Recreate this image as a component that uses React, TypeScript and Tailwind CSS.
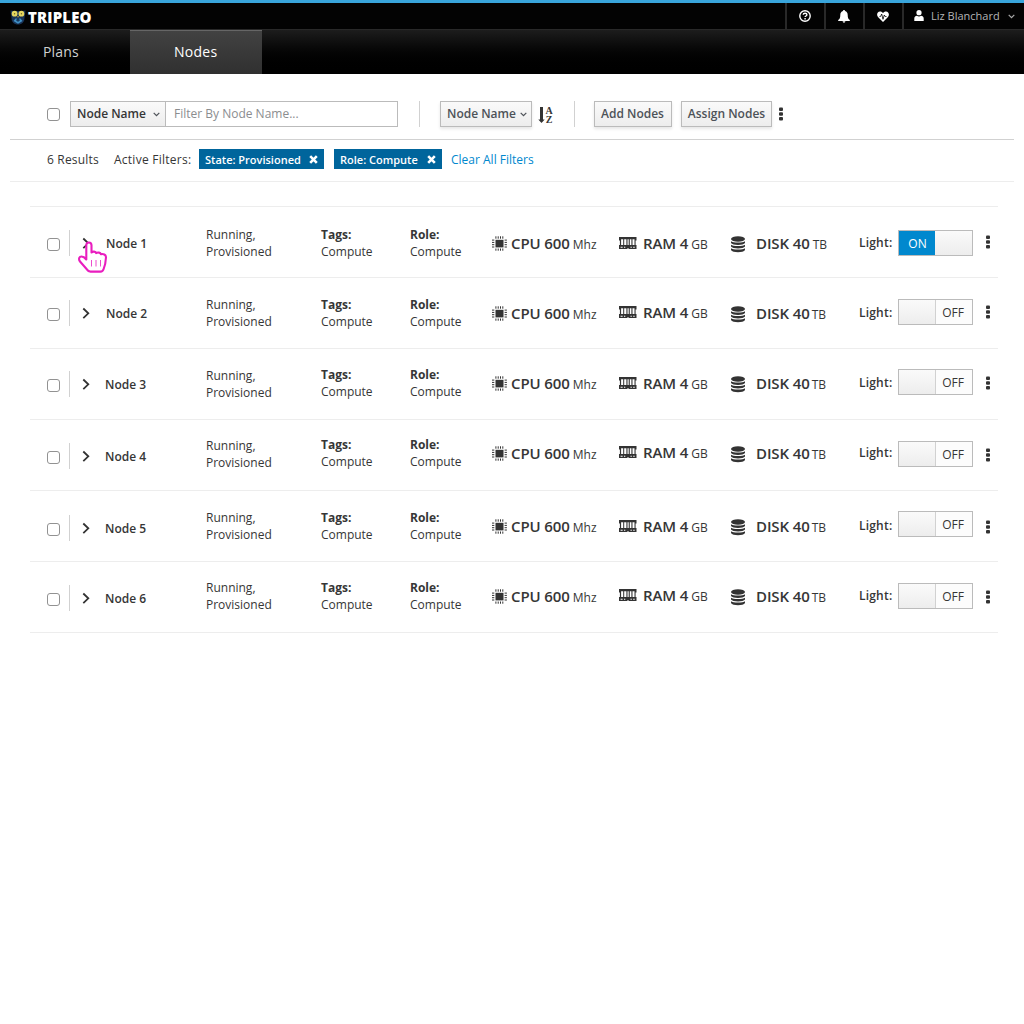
import React from "react";

type Offsets = {
  check: number;
  name: number;
  status: number;
  tags: number;
  stats: number;
  ram: number;
  light: number;
  toggle: number;
  kebab: number;
};

type NodeRow = { id: number; on: boolean; nudge: number; gap: number; top: Offsets };

const nodes: NodeRow[] = [
  { id: 1, on: true, nudge: 0, gap: 3, top: { check: 31, name: 28, status: 19, tags: 19, stats: 26, ram: 26, light: 27, toggle: 23, kebab: 28 } },
  { id: 2, on: false, nudge: 0, gap: 2, top: { check: 30, name: 27, status: 18, tags: 18, stats: 25, ram: 24, light: 26, toggle: 21, kebab: 27 } },
  { id: 3, on: false, nudge: -1, gap: 2, top: { check: 30, name: 27, status: 18, tags: 17, stats: 24, ram: 24, light: 25, toggle: 20, kebab: 27 } },
  { id: 4, on: false, nudge: -1, gap: 2, top: { check: 31, name: 28, status: 17, tags: 16, stats: 23, ram: 22, light: 24, toggle: 21, kebab: 28 } },
  { id: 5, on: false, nudge: -1, gap: 2, top: { check: 32, name: 29, status: 18, tags: 18, stats: 25, ram: 25, light: 26, toggle: 20, kebab: 29 } },
  { id: 6, on: false, nudge: -1, gap: 2, top: { check: 31, name: 28, status: 17, tags: 17, stats: 24, ram: 23, light: 25, toggle: 21, kebab: 28 } },
];

function Check() {
  return <span className="block h-[13px] w-[13px] shrink-0 rounded-[3px] border border-[#929292] bg-white" />;
}

function Kebab() {
  return (
    <svg width="4" height="14" viewBox="0 0 4 14" fill="#333" className="block shrink-0">
      <rect x="0" y="0.5" width="4" height="3.5" rx="1" />
      <rect x="0" y="5.2" width="4" height="3.5" rx="1" />
      <rect x="0" y="10" width="4" height="3.5" rx="1" />
    </svg>
  );
}

function Caret({ color = "#4d5258" }: { color?: string }) {
  return (
    <svg width="7" height="5" viewBox="0 0 7 5" fill="none" stroke={color} strokeWidth="1.2" className="block shrink-0">
      <path d="M0.7 0.8 3.5 3.7 6.3 0.8" />
    </svg>
  );
}

function Owl() {
  return (
    <svg width="16" height="16" viewBox="0 0 16 16" className="block shrink-0">
      <path d="M.5 1.500 4 2h8l3.500-.5L14.500 9c0 4-2.500 6.500-6.500 6.500S1.500 13 1.500 9z" fill="#1a3357" />
      <path d="M5.500 9.500h5l2 2.500L8 14.800 3.500 12z" fill="#3f8fc4" />
      <path d="M7 9h2l.8 2.800L8 12.800l-1.800-1z" fill="#17385e" />
      <circle cx="4.600" cy="4.700" r="2.900" fill="#e6d65f" />
      <circle cx="11.400" cy="4.700" r="2.900" fill="#e6d65f" />
      <circle cx="4.600" cy="4.700" r="0.700" fill="#6b642c" />
      <circle cx="11.400" cy="4.700" r="0.700" fill="#6b642c" />
      <path d="M7.200 7h1.600L8 9z" fill="#c9a83a" />
    </svg>
  );
}

function CpuIcon() {
  const pins = [4, 6.3, 8.6, 10.9];
  return (
    <svg width="15" height="15" viewBox="0 0 15 15" fill="#333" className="block shrink-0">
      <rect x="3.500" y="3.800" width="8" height="7.600" />
      {pins.map((p) => (
        <g key={p}>
          <rect x={p - 0.6} y="0.300" width="1" height="2.400" />
          <rect x={p - 0.6} y="12.500" width="1" height="2.200" />
          <rect x="0" y={p - 0.4} width="2.300" height="1" />
          <rect x="12.600" y={p - 0.4} width="2.300" height="1" />
        </g>
      ))}
    </svg>
  );
}

function RamIcon() {
  return (
    <svg width="18" height="12" viewBox="0 0 18 12" className="block shrink-0">
      <path
        fill="#333"
        fillRule="evenodd"
        d="M0 0h17.500v3.500h-.9v4.500h.9V12H9.500v-1H8.500V12H0V8h.9V3.500H0zM2.100 2.200V8h2.100V2.200zM5.200 2.200V8h2.200V2.200zM8.500 2.200V8h1.200V2.200zM10.800 2.200V8h1.600V2.200zM13.500 2.200V8h2V2.200zM1.600 9.800v1h2v-1zM5 9.800v1h1.300v-1zM11.500 9.800v1h1.300v-1zM14.200 9.800v1h1.500v-1z"
      />
    </svg>
  );
}

function DiskIcon() {
  return (
    <svg width="15" height="17" viewBox="0 0 15 17" fill="#333" className="block shrink-0">
      <ellipse cx="7" cy="3" rx="7" ry="2.800" />
      <path d="M0 5.200C1.500 6.900 12.500 6.900 14 5.200v1.800c-1.500 2.500-12.500 2.500-14 0z" />
      <path d="M0 8.700c1.500 1.700 12.500 1.700 14 0v1.800c-1.500 2.500-12.500 2.500-14 0z" />
      <path d="M0 12.200c1.500 1.700 12.500 1.700 14 0V14c-1.500 3-12.500 3-14 0z" />
    </svg>
  );
}

function Stat({ label, unit, gap }: { label: string; unit: string; gap: number }) {
  return (
    <span className="flex items-baseline whitespace-nowrap">
      <span className="text-[15px] leading-5 font-semibold tracking-[-0.100px]">{label}</span>
      <span className="text-xs leading-5" style={{ marginLeft: gap }}>{unit}</span>
    </span>
  );
}

function Toggle({ on }: { on: boolean }) {
  return (
    <div className="flex h-[26px] w-[75px] border border-[#bbb] bg-[#fcfcfc] text-xs leading-6">
      {on ? (
        <>
          <span className="w-9 bg-[#0088ce] pt-px pl-px text-center text-white">ON</span>
          <span className="flex-1 bg-linear-to-b from-[#fafafa] to-[#ededed]" />
        </>
      ) : (
        <>
          <span className="w-[37px] border-r border-[#d1d1d1] bg-linear-to-b from-[#fafafa] to-[#ededed]" />
          <span className="flex-1 pt-px pr-[2px] text-center font-medium">OFF</span>
        </>
      )}
    </div>
  );
}

function Pair({ label }: { label: string }) {
  return (
    <div className="text-xs leading-[17px]">
      <div className="font-bold">{label}</div>
      <div>Compute</div>
    </div>
  );
}

function Row({ node }: { node: NodeRow }) {
  const t = node.top;
  return (
    <div className="relative flex h-[71px] items-start border-b border-[#ededed] pl-[17px]">
      <div className="w-[22px]" style={{ paddingTop: t.check }}><Check /></div>
      <div className="w-px" style={{ paddingTop: t.check - 8 }}><div className="h-[26px] bg-[#d1d1d1]" /></div>
      <div className="w-9 pl-3" style={{ paddingTop: t.name + 2 }}>
        <svg width="9" height="13" viewBox="0 0 9 13" fill="none" stroke="#333" strokeWidth="1.800" className="block">
          <path d="M1.300 1.500 6.300 6.300 1.300 11.100" />
        </svg>
      </div>
      <div className="w-[100px] text-xs leading-[18px] font-semibold" style={{ paddingTop: t.name }}>
        <span className="block" style={{ marginLeft: node.nudge }}>Node {node.id}</span>
      </div>
      <div className="w-[115px] text-xs leading-[17px]" style={{ paddingTop: t.status }}>
        Running,<br />Provisioned
      </div>
      <div className="w-[89px]" style={{ paddingTop: t.tags }}><Pair label="Tags:" /></div>
      <div className="w-[82px]" style={{ paddingTop: t.tags }}><Pair label="Role:" /></div>
      <div className="flex w-[127px] gap-1" style={{ paddingTop: t.stats }}>
        <div className="pt-[3px]"><CpuIcon /></div>
        <Stat label="CPU 600" unit="Mhz" gap={3} />
      </div>
      <div className="flex w-[112px] gap-[6px]" style={{ paddingTop: t.ram }}>
        <div className="pt-1"><RamIcon /></div>
        <Stat label="RAM 4" unit="GB" gap={3} />
      </div>
      <div className="flex w-[128px] gap-[10px]" style={{ paddingTop: t.stats }}>
        <div className="pt-[3px]"><DiskIcon /></div>
        <Stat label="DISK 40" unit="TB" gap={node.gap} />
      </div>
      <div className="w-[39px] text-xs leading-[17px] font-semibold tracking-[0.200px]" style={{ paddingTop: t.light }}>Light:</div>
      <div className="w-[88px]" style={{ paddingTop: t.toggle }}><Toggle on={node.on} /></div>
      <div style={{ paddingTop: t.kebab }}><Kebab /></div>
      {node.id === 1 && (
        <svg width="30" height="32" viewBox="0 0 30 32" fill="#fff" stroke="#e91ebf" strokeWidth="2.100" strokeLinejoin="round" className="absolute left-12 top-[34px]">
          <path d="M8.300 18.500V4.200c0-3.700 5.200-3.700 5.200 0v7.300c1.200-1.300 4.200-1.200 4.700.6 1.500-1 4.200-.6 4.700 1.200 2.300-.8 5.100.3 5.100 3-.2 4.500-1 8.500-2.500 12-.5 1.800-1.300 2.300-3 2.300h-10c-1.800 0-2.700-.8-3.700-2.300L1.800 20.300c-1.500-2.600-.5-4.800 1.700-4.800 2 0 3.500 1.300 4.800 3z" />
          <path strokeWidth="0.800" d="M13.500 19v6.500M18 19v6.500M22.500 19v6.500" />
        </svg>
      )}
    </div>
  );
}

function FilterTag({ label, className }: { label: string; className: string }) {
  return (
    <div className={`flex h-5 items-center justify-between bg-[#00659c] px-[6px] text-[11px] font-semibold text-white ${className}`}>
      <span>{label}</span>
      <svg width="9" height="9" viewBox="0 0 9 9" stroke="#fff" strokeWidth="2.600" className="block">
        <path d="M1.200 1.200 7.800 7.800M7.800 1.200 1.200 7.800" />
      </svg>
    </div>
  );
}

const button =
  "flex h-[26px] items-center border border-[#bbb] bg-linear-to-b from-[#fafafa] to-[#ededed] text-xs font-semibold whitespace-nowrap";

export default function App() {
  return (
    <div className="h-[1024px] w-[1024px] overflow-hidden bg-white font-['Open_Sans',sans-serif] text-[#363636]">
      <header className="flex h-[29px] justify-between border-t-[3px] border-[#39a5dc] bg-[#030303]">
        <div className="flex items-start pl-[10px]">
          <div className="pt-[6px]"><Owl /></div>
          <span className="pt-[4px] pl-[2px] text-[15px] leading-5 font-extrabold tracking-[0.150px] text-white">TRIPLEO</span>
        </div>
        <div className="flex text-white">
          <div className="flex w-[39px] items-center justify-center border-l-2 border-[#292929] pr-[2px]">
            <svg width="12" height="12" viewBox="0 0 12 12" fill="none" stroke="#fff" strokeWidth="1.400" className="block">
              <circle cx="6" cy="6" r="5.200" />
              <path d="M4.200 4.800c.1-2 3.700-2 3.700 0 0 1.200-1.800 1.200-1.800 2.300M6.100 8v1.400" />
            </svg>
          </div>
          <div className="flex w-[39px] items-center justify-center border-l-2 border-[#292929] pr-[2px]">
            <svg width="12" height="13" viewBox="0 0 12 13" fill="#fff" className="block">
              <path d="M6 0c.6 0 1 .4 1 1 1.800.5 2.700 2 2.700 4 0 2.800.6 4 2.100 5v.9H.2V10c1.500-1 2.100-2.200 2.100-5 0-2 .9-3.500 2.700-4 0-.6.4-1 1-1zM4.600 11.300h2.800a1.400 1.400 0 0 1-2.800 0z" />
            </svg>
          </div>
          <div className="flex w-[39px] items-center justify-center border-l-2 border-[#292929] pr-[2px]">
            <svg width="12" height="11" viewBox="0 0 12 11" className="block">
              <path fill="#fff" d="M6 11 1 6C-.8 3.800.2.500 3 .500c1.400 0 2.300.6 3 1.500C6.700 1.100 7.600.500 9 .500c2.800 0 3.800 3.300 2 5.500z" />
              <path fill="none" stroke="#030303" strokeWidth="0.800" d="M2.500 5.500h1l1.200-2.500L6 8.300 7.300 4l.9 1.500h1.300" />
            </svg>
          </div>
          <div className="flex w-[122px] items-center border-l-2 border-[#292929] pb-px pl-[10px]">
            <svg width="10" height="11" viewBox="0 0 10 11" fill="#fff" className="block">
              <circle cx="5" cy="2.700" r="2.600" />
              <path d="M.3 11V8.500C.3 6.800 1.500 6 3 5.800c1 .8 3 .8 4 0 1.500.2 2.700 1 2.700 2.700V11z" />
            </svg>
            <span className="ml-[7px] pt-px text-[11px] text-[#b5b5b5]">Liz Blanchard</span>
            <span className="ml-[8px] pt-[2px]"><Caret color="#aaa" /></span>
          </div>
        </div>
      </header>
      <nav className="flex h-[45px] border-t border-[#292929] bg-linear-to-b from-[#1d1d1d] to-black text-[14px]">
        <a className="flex w-[130px] items-center pb-[2px] pl-[43px] tracking-[0.150px] text-[#d1d1d1]">Plans</a>
        <a className="flex w-[132px] items-center border-t border-[#666] bg-linear-to-b from-[#424242] to-[#303030] pb-[3px] pl-[44px] font-medium tracking-[0.250px] text-white">Nodes</a>
      </nav>

      <div className="mx-[10px]">
        <div className="flex h-[66px] items-start border-b border-[#d1d1d1] pt-[27px] pl-[37px]">
          <div className="mr-[10px] pt-[7px]"><Check /></div>
          <div className={`${button} w-24 justify-between pr-[5px] pl-[6px]`}>Node Name<Caret /></div>
          <div className="flex h-[26px] w-[232px] items-center border border-l-0 border-[#bbb] pl-2 text-xs text-[#8b8d8f]">Filter By Node Name...</div>
          <div className="ml-[21px] h-[26px] w-px bg-[#d1d1d1]" />
          <div className={`${button} ml-5 w-[92px] justify-between pr-1 pl-[6px] text-[#4d5258] shadow-[0_2px_3px_rgba(3,3,3,0.1)]`}>Node Name<Caret /></div>
          <div className="ml-[6px] flex pt-[5px]">
            <svg width="7" height="18" viewBox="0 0 7 18" fill="#333" className="block">
              <path d="M2 1h3v12.500h1.700L3.500 17 .3 13.500H2z" />
            </svg>
            <div className="flex w-2 flex-col items-center font-['Liberation_Serif',serif] text-[10px] leading-[9px] font-bold">
              <span>A</span>
              <span>Z</span>
            </div>
          </div>
          <div className="ml-[21px] h-[26px] w-px bg-[#d1d1d1]" />
          <div className={`${button} ml-[19px] w-[78px] justify-center pr-px text-[#4d5258] shadow-[0_2px_3px_rgba(3,3,3,0.1)]`}>Add Nodes</div>
          <div className={`${button} ml-[9px] w-[91px] justify-center text-[#4d5258] shadow-[0_2px_3px_rgba(3,3,3,0.1)]`}>Assign Nodes</div>
          <div className="ml-[7px] pt-[6px]"><Kebab /></div>
        </div>
        <div className="flex h-[42px] items-start border-b border-[#ededed] pt-[9px] pl-[37px] text-xs leading-[21px]">
          <span className="w-[67px] font-medium tracking-[0.180px]">6 Results</span>
          <span className="w-[85px] font-medium tracking-[0.250px]">Active Filters:</span>
          <FilterTag label="State: Provisioned" className="w-[125px]" />
          <FilterTag label="Role: Compute" className="ml-[10px] w-[108px]" />
          <a className="ml-[9px] text-[#0088ce]">Clear All Filters</a>
        </div>
      </div>

      <main className="mt-6 ml-[30px] w-[968px] border-t border-[#ededed]">
        {nodes.map((n) => <Row key={n.id} node={n} />)}
      </main>
    </div>
  );
}
